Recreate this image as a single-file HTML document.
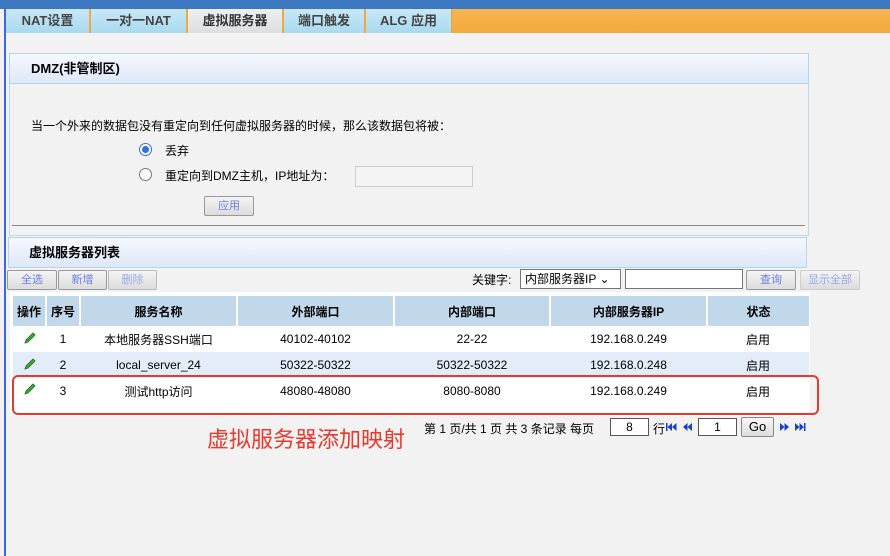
<!DOCTYPE html>
<html><head><meta charset="utf-8"><style>
*{margin:0;padding:0;box-sizing:border-box}
body{width:890px;height:556px;background:#f2f2f2;font-family:"Liberation Sans","Noto Sans CJK SC",sans-serif;font-size:12px;color:#000;position:relative;overflow:hidden}
.a{position:absolute}
.tab{position:absolute;top:9px;height:24px;background:linear-gradient(#c9e8f6,#a8d9ef);border-right:2px solid #f0a840;font-weight:bold;font-size:13px;color:#444;text-align:center;line-height:24px}
.hdr{position:absolute;background:linear-gradient(#f6f8fe,#dde8f8);border:1px solid #b8d2ea;font-weight:bold;font-size:13px;padding-left:20px}
.btn{position:absolute;height:20px;border:1px solid #999;border-radius:2px;background:linear-gradient(#f4f4f4,#dcdcdc);color:#6a7fe6;font-size:11px;text-align:center;line-height:18px}
table{border-collapse:collapse;position:absolute;left:13px;top:296px;width:796px;font-size:12px}
th{background:#c0d8ea;height:30px;font-weight:bold;border-right:2px solid #fff;font-size:12px}
td{text-align:center;height:26px}
tr.r2 td{background:#e3edf9}
tr.r1 td,tr.r3 td{background:#fff}
.pen{display:inline-block;width:14px;height:14px}
</style></head><body>
<div class="a" style="left:0;top:0;width:890px;height:9px;background:#3b78bf"></div>
<div class="a" style="left:4px;top:9px;width:2px;height:547px;background:#3b66f0"></div>
<div class="a" style="left:453px;top:9px;width:437px;height:24px;background:linear-gradient(#f7b552,#f3a93c)"></div>
<div class="tab" style="left:6px;width:85px">NAT设置</div>
<div class="tab" style="left:91px;width:97px">一对一NAT</div>
<div class="tab" style="left:188px;width:96px;background:linear-gradient(#eef0f0,#dcdedf);color:#333">虚拟服务器</div>
<div class="tab" style="left:284px;width:82px">端口触发</div>
<div class="tab" style="left:366px;width:87px">ALG 应用</div>

<div class="a" style="left:9px;top:53px;width:800px;height:183px;border:1px solid #c0d6ec"></div>
<div class="hdr" style="left:9px;top:53px;width:800px;height:31px;line-height:30px;padding-left:21px">DMZ(非管制区)</div>
<div class="a" style="left:31px;top:117px;font-size:12px">当一个外来的数据包没有重定向到任何虚拟服务器的时候，那么该数据包将被：</div>
<div class="a" style="left:139px;top:143px;width:13px;height:13px;border-radius:50%;border:1px solid #2f6ee8;background:#fff"><div style="margin:2px;width:7px;height:7px;border-radius:50%;background:#2f6ee8"></div></div>
<div class="a" style="left:165px;top:142px">丢弃</div>
<div class="a" style="left:139px;top:168px;width:13px;height:13px;border-radius:50%;border:1px solid #777;background:#fff"></div>
<div class="a" style="left:165px;top:167px">重定向到DMZ主机，IP地址为：</div>
<div class="a" style="left:355px;top:166px;width:118px;height:21px;border:1px solid #ccc;background:#f4f4f4"></div>
<div class="btn" style="left:204px;top:196px;width:50px">应用</div>
<div class="a" style="left:12px;top:225px;width:793px;height:1px;background:#888"></div>

<div class="hdr" style="left:8px;top:237px;width:799px;height:31px;line-height:30px;padding-left:20px">虚拟服务器列表</div>
<div class="btn" style="left:7px;top:270px;width:50px">全选</div>
<div class="btn" style="left:58px;top:270px;width:49px">新增</div>
<div class="btn" style="left:108px;top:270px;width:49px;border-color:#bbb;color:#9aa8e8">删除</div>
<div class="a" style="left:472px;top:271px">关键字:</div>
<div class="a" style="left:520px;top:269px;width:101px;height:20px;border:1px solid #777;background:#fff;padding-left:4px;line-height:18px;font-size:12px">内部服务器IP ⌄</div>
<div class="a" style="left:625px;top:269px;width:118px;height:20px;border:1px solid #777;background:#fff"></div>
<div class="btn" style="left:746px;top:270px;width:50px">查询</div>
<div class="btn" style="left:800px;top:270px;width:60px;border-color:#ccc;color:#9aa8e8">显示全部</div>

<div class="a" style="left:10px;top:292px;width:800px;height:124px;background:#fff"></div>
<table>
<tr><th style="width:33px">操作</th><th style="width:34px">序号</th><th style="width:157px">服务名称</th><th style="width:157px">外部端口</th><th style="width:156px">内部端口</th><th style="width:157px">内部服务器IP</th><th style="border-right:0">状态</th></tr>
<tr class="r1"><td><svg class="pen" viewBox="0 0 14 14"><path d="M2 12 L3 9 L10 2 L12 4 L5 11 Z" fill="#3aa83a" stroke="#1d6f1d" stroke-width="0.8"/></svg></td><td>1</td><td>本地服务器SSH端口</td><td>40102-40102</td><td>22-22</td><td>192.168.0.249</td><td>启用</td></tr>
<tr class="r2"><td><svg class="pen" viewBox="0 0 14 14"><path d="M2 12 L3 9 L10 2 L12 4 L5 11 Z" fill="#3aa83a" stroke="#1d6f1d" stroke-width="0.8"/></svg></td><td>2</td><td>local_server_24</td><td>50322-50322</td><td>50322-50322</td><td>192.168.0.248</td><td>启用</td></tr>
<tr class="r3"><td style="vertical-align:top;padding-top:4px;height:36px"><svg class="pen" viewBox="0 0 14 14"><path d="M2 12 L3 9 L10 2 L12 4 L5 11 Z" fill="#3aa83a" stroke="#1d6f1d" stroke-width="0.8"/></svg></td><td style="vertical-align:top;padding-top:6px">3</td><td style="vertical-align:top;padding-top:5px">测试http访问</td><td style="vertical-align:top;padding-top:6px">48080-48080</td><td style="vertical-align:top;padding-top:6px">8080-8080</td><td style="vertical-align:top;padding-top:6px">192.168.0.249</td><td style="vertical-align:top;padding-top:5px">启用</td></tr>
</table>
<div class="a" style="left:12px;top:375px;width:807px;height:40px;border:2px solid #e8392e;border-radius:6px"></div>

<div class="a" style="left:424px;top:420px;font-size:12px">第 1 页/共 1 页 共 3 条记录 每页</div>
<div class="a" style="left:610px;top:418px;width:39px;height:18px;border:1px solid #555;background:#fff;text-align:center;line-height:16px">8</div>
<div class="a" style="left:653px;top:420px">行</div>
<svg class="a" style="left:666px;top:422px" width="30" height="10" viewBox="0 0 30 10"><g fill="#1a3fcf"><rect x="0" y="1" width="1.5" height="8"/><path d="M1.5 5 L6 1 L6 9Z M6 5 L10.5 1 L10.5 9Z"/><path d="M17 5 L21.5 1 L21.5 9Z M21.5 5 L26 1 L26 9Z"/></g></svg>
<div class="a" style="left:698px;top:418px;width:39px;height:18px;border:1px solid #555;background:#fff;text-align:center;line-height:16px">1</div>
<div class="a" style="left:741px;top:417px;width:33px;height:20px;border:1px solid #888;border-radius:2px;background:linear-gradient(#f8f8f8,#ddd);text-align:center;line-height:18px;font-size:13px">Go</div>
<svg class="a" style="left:780px;top:422px" width="30" height="10" viewBox="0 0 30 10"><g fill="#1a3fcf"><path d="M0 1 L4.5 5 L0 9Z M4.5 1 L9 5 L4.5 9Z"/><path d="M15 1 L19.5 5 L15 9Z M19.5 1 L24 5 L19.5 9Z"/><rect x="24" y="1" width="1.5" height="8"/></g></svg>
<div class="a" style="left:207px;top:426px;font-size:22px;color:#e8392e;line-height:28px">虚拟服务器添加映射</div>
</body></html>
